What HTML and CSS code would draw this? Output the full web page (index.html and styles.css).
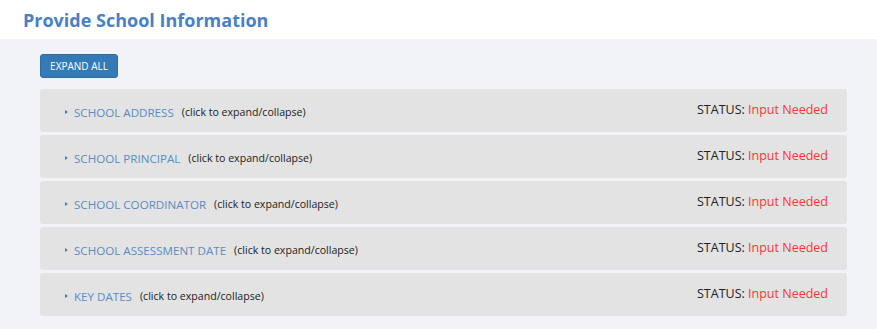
FILE: index.html
```html
<!DOCTYPE html>
<html lang="en">
<head>
    <meta charset="UTF-8">
    <title>Provide School Information</title>
    <link rel="stylesheet" href="styles.css">
</head>
<body>

    <div class="page-header">
        <h1>Provide School Information</h1>
    </div>

    <div class="content">
        <button class="expand-btn">EXPAND ALL</button>

        <div class="panels">
            <div class="panel">
                <div class="panel-title"><span class="arrow"></span><span class="name">SCHOOL ADDRESS</span><span class="hint">(click to expand/collapse)</span></div>
                <div class="status">STATUS: <span class="needed">Input Needed</span></div>
            </div>
            <div class="panel">
                <div class="panel-title"><span class="arrow"></span><span class="name">SCHOOL PRINCIPAL</span><span class="hint">(click to expand/collapse)</span></div>
                <div class="status">STATUS: <span class="needed">Input Needed</span></div>
            </div>
            <div class="panel">
                <div class="panel-title"><span class="arrow"></span><span class="name">SCHOOL COORDINATOR</span><span class="hint">(click to expand/collapse)</span></div>
                <div class="status">STATUS: <span class="needed">Input Needed</span></div>
            </div>
            <div class="panel">
                <div class="panel-title"><span class="arrow"></span><span class="name">SCHOOL ASSESSMENT DATE</span><span class="hint">(click to expand/collapse)</span></div>
                <div class="status">STATUS: <span class="needed">Input Needed</span></div>
            </div>
            <div class="panel">
                <div class="panel-title"><span class="arrow"></span><span class="name">KEY DATES</span><span class="hint">(click to expand/collapse)</span></div>
                <div class="status">STATUS: <span class="needed">Input Needed</span></div>
            </div>
        </div>
    </div>

</body>
</html>
```

FILE: styles.css
```css
body {
    margin: 0;
    padding: 0;
    background-color: #ffffff;
    font-family: "Open Sans", Arial, sans-serif;
    color: #222;
}

.page-header {
    height: 39px;
    padding-left: 23px;
    display: flex;
    align-items: center;
}

.page-header h1 {
    margin: 0;
    font-size: 18px;
    font-weight: 700;
    color: #4a80c5;
}

.content {
    background-color: #f2f3f8;
    padding: 15px 30px 13px 40px;
}

.expand-btn {
    display: block;
    width: 78px;
    height: 24px;
    padding: 0;
    background-color: #337ab7;
    border: 1px solid #2e6da4;
    border-radius: 3px;
    color: #ffffff;
    font-family: "Open Sans", Arial, sans-serif;
    font-size: 10px;
    cursor: pointer;
}

.panels {
    margin-top: 11px;
    display: flex;
    flex-direction: column;
    gap: 3px;
}

.panel {
    height: 43px;
    background-color: #e3e3e3;
    border-radius: 3px;
    display: flex;
    justify-content: space-between;
    align-items: center;
    padding: 0 19px 0 25px;
}

.panel-title {
    display: flex;
    align-items: center;
    padding-top: 3px;
}

.arrow {
    width: 0;
    height: 0;
    border-top: 2px solid transparent;
    border-bottom: 2px solid transparent;
    border-left: 3px solid #4a7fb5;
    margin-right: 6px;
}

.name {
    font-size: 11.6px;
    color: #5a8dc1;
    margin-right: 8px;
}

.hint {
    font-size: 10.6px;
    color: #222;
}

.status {
    font-size: 12.5px;
    color: #222;
    padding-bottom: 3px;
}

.needed {
    color: #ff3333;
}
```
